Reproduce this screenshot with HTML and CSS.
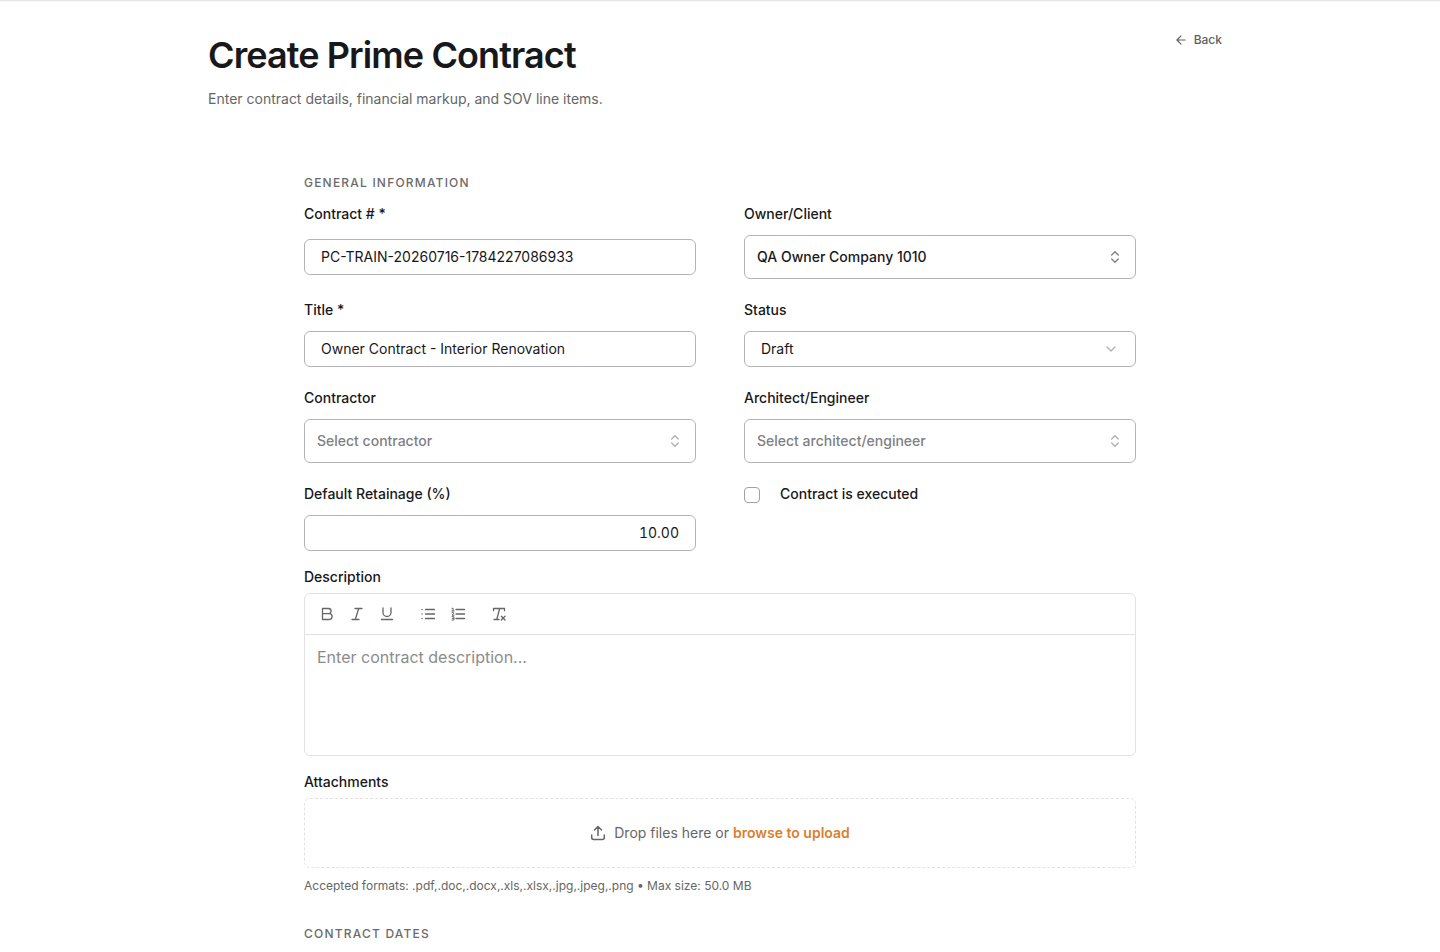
FILE: index.html
```html
<!DOCTYPE html>
<html lang="en">

<head>
    <meta charset="UTF-8">
    <meta name="viewport" content="width=device-width, initial-scale=1">
    <title>Create Prime Contract</title>
    <link rel="stylesheet" href="styles.css">
</head>

<body>
    <main class="page">
        <header class="page-header">
            <div>
                <h1 class="page-title">Create Prime Contract</h1>
                <p class="page-subtitle">Enter contract details, financial markup, and SOV line items.</p>
            </div>
            <a href="#" class="back-link">
                <svg class="icon-sm" viewBox="0 0 24 24"><path d="M19 12H5M12 19l-7-7 7-7"/></svg>
                Back
            </a>
        </header>

        <form class="contract-form" action="#">
            <h2 class="section-title">General Information</h2>

            <div class="field-grid">
                <div class="field">
                    <label class="label" for="contract-number">Contract # *</label>
                    <div class="control-row">
                        <input class="input" id="contract-number" type="text" value="PC-TRAIN-20260716-1784227086933">
                    </div>
                </div>
                <div class="field">
                    <label class="label" for="owner">Owner/Client</label>
                    <div class="select-wrap">
                        <select class="input combo" id="owner">
                            <option>QA Owner Company 1010</option>
                        </select>
                        <svg class="select-icon dark" viewBox="0 0 24 24"><path d="M7 15l5 5 5-5M7 9l5-5 5 5"/></svg>
                    </div>
                </div>

                <div class="field">
                    <label class="label" for="title">Title *</label>
                    <input class="input" id="title" type="text" value="Owner Contract - Interior Renovation">
                </div>
                <div class="field">
                    <label class="label" for="status">Status</label>
                    <div class="select-wrap status">
                        <select class="input" id="status">
                            <option>Draft</option>
                        </select>
                        <svg class="select-icon" viewBox="0 0 24 24"><path d="M6 9l6 6 6-6"/></svg>
                    </div>
                </div>

                <div class="field">
                    <label class="label" for="contractor">Contractor</label>
                    <div class="select-wrap">
                        <select class="input combo empty" id="contractor">
                            <option>Select contractor</option>
                        </select>
                        <svg class="select-icon" viewBox="0 0 24 24"><path d="M7 15l5 5 5-5M7 9l5-5 5 5"/></svg>
                    </div>
                </div>
                <div class="field">
                    <label class="label" for="architect">Architect/Engineer</label>
                    <div class="select-wrap">
                        <select class="input combo empty" id="architect">
                            <option>Select architect/engineer</option>
                        </select>
                        <svg class="select-icon" viewBox="0 0 24 24"><path d="M7 15l5 5 5-5M7 9l5-5 5 5"/></svg>
                    </div>
                </div>

                <div class="field">
                    <label class="label" for="retainage">Default Retainage (%)</label>
                    <input class="input number" id="retainage" type="text" inputmode="decimal" value="10.00">
                </div>
                <div class="check-field">
                    <input class="checkbox" id="executed" type="checkbox">
                    <label class="label" for="executed">Contract is executed</label>
                </div>
            </div>

            <div class="block">
                <label class="label" for="description">Description</label>
                <div class="editor">
                    <div class="toolbar">
                        <div class="tool-group">
                            <button type="button" class="tool" aria-label="Bold">
                                <svg class="icon" viewBox="0 0 14 14"><path d="M2.500 1.500h6a2.600 2.600 0 0 1 0 5.200h-6zM2.500 6.700h6.700a2.900 2.900 0 0 1 0 5.800H2.500z"/></svg>
                            </button>
                            <button type="button" class="tool" aria-label="Italic">
                                <svg class="icon" viewBox="0 0 14 14"><path d="M5 1.500h7M2 12.500h7M8.700 1.500l-3.400 11"/></svg>
                            </button>
                            <button type="button" class="tool" aria-label="Underline">
                                <svg class="icon" viewBox="0 0 14 14"><path d="M3 1v4.500a4 4 0 0 0 8 0V1M1.500 12.500h11"/></svg>
                            </button>
                        </div>
                        <div class="tool-group">
                            <button type="button" class="tool" aria-label="Bullet list">
                                <svg class="icon" viewBox="0 0 14 14"><path d="M4.500 2.500h9M4.500 7h9M4.500 11.500h9"/><path d="M1 2.500h.1M1 7h.1M1 11.500h.1"/></svg>
                            </button>
                            <button type="button" class="tool" aria-label="Numbered list">
                                <svg class="icon" viewBox="0 0 14 14"><path d="M5 2.500h8.500M5 7h8.500M5 11.500h8.500"/><path class="thin" d="M1 1.500l1-.5v3M1 4h2M1 5.700h1.700v1L1 8.200h2M1 9.700h1.900v3.300H1M1.400 11.300h1.500"/></svg>
                            </button>
                        </div>
                        <div class="tool-group">
                            <button type="button" class="tool" aria-label="Clear formatting">
                                <svg class="icon" viewBox="0 0 14 14"><path d="M1.500 3.700V1.500h11v2.200M7.700 1.500l-3 11M2 12.500h5M9.300 9.200l3.700 3.800M13 9.200L9.300 13"/></svg>
                            </button>
                        </div>
                    </div>
                    <textarea class="editor-text" id="description" placeholder="Enter contract description..."></textarea>
                </div>
            </div>

            <div class="block">
                <span class="label">Attachments</span>
                <div class="dropzone">
                    <svg class="upload-icon" viewBox="0 0 16 16"><path d="M8 10.500V2M4.500 5L8 1.500 11.500 5M1.700 10v2.500a2 2 0 0 0 2 2h8.600a2 2 0 0 0 2-2V10"/></svg>
                    <span>Drop files here or <a href="#" class="browse">browse to upload</a></span>
                </div>
                <p class="hint">Accepted formats: .pdf,.doc,.docx,.xls,.xlsx,.jpg,.jpeg,.png • Max size: 50.0 MB</p>
            </div>

            <h2 class="section-title dates">Contract Dates</h2>
        </form>
    </main>
</body>

</html>
```

FILE: styles.css
```css
* {
    box-sizing: border-box;
}

body {
    margin: 0;
    background-color: #fff;
    border-top: 1px solid #e5e5e5;
    box-shadow: inset 0 1px 0 #f8f8f8;
    color: #18181b;
    font-family: Inter, sans-serif;
    font-size: 14px;
    line-height: 20px;
}

h1, h2, p {
    margin: 0;
}

svg {
    fill: none;
    stroke: currentColor;
    stroke-width: 2;
    stroke-linecap: round;
    stroke-linejoin: round;
}

.page {
    max-width: 1024px;
    margin: 0 auto;
    padding-top: 31px;
}

.page-header {
    display: flex;
    justify-content: space-between;
    align-items: flex-start;
}

.page-title {
    font-size: 36px;
    line-height: 47px;
    font-weight: 600;
    letter-spacing: -0.025em;
}

.page-subtitle {
    margin-top: 10px;
    color: #666;
}

.back-link {
    display: flex;
    align-items: center;
    gap: 6px;
    padding: 0 10px;
    color: #606060;
    font-size: 12px;
    line-height: 16px;
    font-weight: 500;
    text-decoration: none;
}

.icon-sm {
    width: 14px;
    height: 14px;
}

.contract-form {
    max-width: 832px;
    margin: 66px auto 0;
    padding-bottom: 10px;
}

.section-title {
    color: #6b6b6b;
    font-size: 12px;
    line-height: 16px;
    font-weight: 500;
    letter-spacing: 0.1em;
    text-transform: uppercase;
}

.field-grid {
    display: grid;
    grid-template-columns: 1fr 1fr;
    gap: 24px 48px;
    margin-top: 16px;
}

.field {
    display: flex;
    flex-direction: column;
    gap: 14px;
}

.label {
    font-size: 14px;
    line-height: 14px;
    font-weight: 500;
}

.control-row {
    display: flex;
    align-items: center;
    height: 44px;
}

.input {
    width: 100%;
    height: 36px;
    padding: 0 16px 2px;
    background-color: #fff;
    border: 1px solid #b4b4b8;
    border-radius: 6px;
    color: #18181b;
    font-family: inherit;
    font-size: 14px;
    appearance: none;
}

.combo {
    height: 44px;
    padding: 0 12px 2px;
    font-weight: 500;
}

.empty {
    color: #808085;
}

.number {
    text-align: right;
    font-variant-numeric: tabular-nums;
}

.select-wrap {
    display: flex;
    position: relative;
}

.select-icon {
    position: absolute;
    top: 50%;
    right: 13px;
    width: 16px;
    height: 16px;
    margin-top: -8px;
    color: #b0b0b4;
    pointer-events: none;
}

.status .select-icon {
    right: 17px;
}

.select-icon.dark {
    color: #808084;
}

.check-field {
    display: flex;
    align-items: flex-start;
    gap: 20px;
}

.checkbox {
    width: 16px;
    height: 16px;
    margin: 0;
    background-color: #fff;
    border: 1px solid #a0a0a4;
    border-radius: 4px;
    appearance: none;
}

.checkbox:checked {
    background-color: #d97f2e;
}

.block {
    display: flex;
    flex-direction: column;
    gap: 9px;
    margin-top: 19px;
}

.editor {
    border: 1px solid #e2e2e4;
    border-radius: 6px;
}

.toolbar {
    display: flex;
    gap: 13px;
    padding: 6px 8px;
    border-bottom: 1px solid #e2e2e4;
}

.tool-group {
    display: flex;
    gap: 2px;
}

.tool {
    display: flex;
    align-items: center;
    justify-content: center;
    width: 28px;
    height: 28px;
    padding: 0;
    background: none;
    border: 0;
    color: #666;
}

.icon {
    width: 14px;
    height: 14px;
    stroke-width: 1.3;
}

.thin {
    stroke-width: 1;
}

.editor-text {
    display: block;
    width: 100%;
    height: 120px;
    padding: 10px 12px;
    background: none;
    border: 0;
    color: #18181b;
    font-family: inherit;
    font-size: 16px;
    line-height: 24px;
    resize: none;
}

.editor-text::placeholder {
    color: #8c8c8c;
}

.dropzone {
    display: flex;
    align-items: center;
    justify-content: center;
    gap: 8px;
    padding: 24px;
    border: 1px dashed #e2e2e4;
    border-radius: 6px;
    color: #666;
}

.upload-icon {
    width: 16px;
    height: 16px;
    stroke-width: 1.5;
}

.browse {
    color: #d97f2e;
    font-weight: 600;
    text-decoration: none;
}

.hint {
    margin-top: 1px;
    color: #666;
    font-size: 12px;
    line-height: 16px;
}

.dates {
    margin-top: 32px;
}
```
